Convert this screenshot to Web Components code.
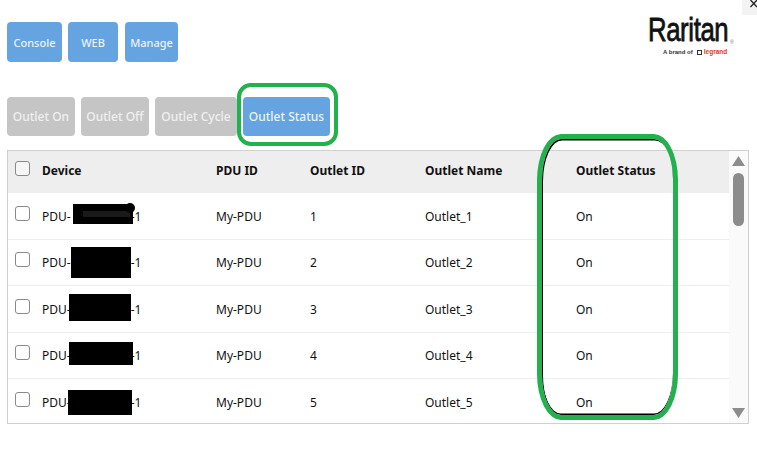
<!DOCTYPE html>
<html>
<head>
<meta charset="utf-8">
<title>Outlet Status</title>
<style>
  html, body { margin: 0; padding: 0; background: #fff; }
  body { font-family: "Noto Sans", "Liberation Sans", sans-serif; font-size: 12px; color: #111; overflow: hidden; }
</style>
</head>
<body>
<pdu-page>
  <pdu-button slot="nav" width="55" height="40" small>Console</pdu-button>
  <pdu-button slot="nav" width="50" height="40" small>WEB</pdu-button>
  <pdu-button slot="nav" width="53" height="40" small style="margin-left:1px">Manage</pdu-button>
  <raritan-logo slot="logo"></raritan-logo>

  <pdu-button slot="actions" width="68" height="39" disabled>Outlet On</pdu-button>
  <pdu-button slot="actions" width="68" height="39" disabled>Outlet Off</pdu-button>
  <pdu-button slot="actions" width="82" height="39" disabled>Outlet Cycle</pdu-button>
  <pdu-button slot="actions" width="87" height="39">Outlet Status</pdu-button>

  <outlet-table slot="table">
    <outlet-row outlet="1" mask="65,11,60,20" blob></outlet-row>
    <outlet-row outlet="2" mask="63,7,60,31"></outlet-row>
    <outlet-row outlet="3" mask="61,8,62,27"></outlet-row>
    <outlet-row outlet="4" mask="61,9,64,23"></outlet-row>
    <outlet-row outlet="5" mask="60,11,64,25"></outlet-row>
  </outlet-table>

  <green-ring slot="marks" x="237" y="83" w="101" h="63" stroke="4.5" rx="14" ry="14"></green-ring>
  <green-ring slot="marks" x="537" y="134" w="141" h="286" stroke="5" rx="24" ry="46" inked></green-ring>
</pdu-page>

<script>
// Page shell
const pageTemplate = document.createElement('template');
pageTemplate.innerHTML = `
<style>
  :host {
    display: block;
    position: relative;
    width: 757px;
    height: 465px;
    box-sizing: border-box;
    padding: 22px 8px 0 7px;
  }
  .top {
    display: flex;
    justify-content: space-between;
    height: 40px;
  }
  .group {
    display: flex;
    gap: 6px;
  }
  .actions {
    margin-top: 35px;
    margin-bottom: 14px;
  }
  .close {
    position: absolute;
    right: 0;
    top: 0;
    width: 15px;
    height: 15px;
    background: #f3f3f3;
    overflow: hidden;
  }
  .close svg { display: block; margin-left: 8px; }
</style>
<div class="top">
  <div class="group"><slot name="nav"></slot></div>
  <slot name="logo"></slot>
</div>
<div class="group actions"><slot name="actions"></slot></div>
<slot name="table"></slot>
<slot name="marks"></slot>
<div class="close">
  <svg width="7" height="14" viewBox="0 0 7 14"><path d="M0.500 0L7 7M7 0L0.500 7" stroke="#222" stroke-width="1.300" fill="none"/></svg>
</div>
`;

class PduPage extends HTMLElement {
  constructor() {
    super();
    this.attachShadow({ mode: 'open' });
    this.shadowRoot.appendChild(pageTemplate.content.cloneNode(true));
  }
}

// Button
const buttonTemplate = document.createElement('template');
buttonTemplate.innerHTML = `
<style>
  :host {
    display: flex;
    align-items: center;
    justify-content: center;
    box-sizing: border-box;
    border-radius: 4px;
    background: #65a4e0;
    color: #eaf3fc;
    font-size: 12px;
    font-weight: 500;
    white-space: nowrap;
  }
  :host([small]) {
    font-size: 11px;
  }
  :host([disabled]) {
    background: #c5c5c5;
    color: #f0f0f0;
  }
</style>
<slot></slot>
`;

class PduButton extends HTMLElement {
  constructor() {
    super();
    this.attachShadow({ mode: 'open' });
    this.shadowRoot.appendChild(buttonTemplate.content.cloneNode(true));
  }

  connectedCallback() {
    this.style.width = this.getAttribute('width') + 'px';
    this.style.height = this.getAttribute('height') + 'px';
  }
}

// Logo
const logoTemplate = document.createElement('template');
logoTemplate.innerHTML = `
<style>
  :host {
    display: block;
    position: relative;
    width: 92px;
    height: 40px;
    margin-top: -8px;
    margin-right: 9px;
    font-family: "Liberation Sans", sans-serif;
  }
  .name {
    position: absolute;
    left: 0;
    top: -3px;
    font-size: 33px;
    line-height: 38px;
    font-weight: 400;
    color: #111;
    letter-spacing: -0.5px;
    transform: scaleX(0.78);
    transform-origin: 0 0;
    -webkit-text-stroke: 0.8px #111;
    white-space: nowrap;
  }
  .reg {
    position: absolute;
    left: 82px;
    top: 25px;
    font-size: 5px;
    line-height: 6px;
    color: #777;
  }
  .tag {
    position: absolute;
    left: 15px;
    top: 34px;
    display: flex;
    align-items: center;
    gap: 2px;
    font-size: 6px;
    line-height: 8px;
    font-weight: 700;
    color: #333;
    white-space: nowrap;
  }
  .mark {
    width: 5px;
    height: 5px;
    box-sizing: border-box;
    border: 1.5px solid #333;
    margin-left: 2px;
  }
  .legrand { color: #e3342f; font-size: 6.5px; }
</style>
<span class="name">Raritan</span>
<span class="reg">®</span>
<div class="tag"><span>A brand of</span><span class="mark"></span><span class="legrand">legrand</span></div>
`;

class RaritanLogo extends HTMLElement {
  constructor() {
    super();
    this.attachShadow({ mode: 'open' });
    this.shadowRoot.appendChild(logoTemplate.content.cloneNode(true));
  }
}

// Checkbox
const checkTemplate = document.createElement('template');
checkTemplate.innerHTML = `
<style>
  :host {
    display: block;
    box-sizing: border-box;
    width: 15px;
    height: 15px;
    border: 1.5px solid #8a8a8a;
    border-radius: 3px;
    background: #fff;
  }
</style>
`;

class PduCheck extends HTMLElement {
  constructor() {
    super();
    this.attachShadow({ mode: 'open' });
    this.shadowRoot.appendChild(checkTemplate.content.cloneNode(true));
  }
}

// Table with its header and fake scrollbar
const tableTemplate = document.createElement('template');
tableTemplate.innerHTML = `
<style>
  :host {
    display: block;
    box-sizing: border-box;
    width: 742px;
    height: 274px;
    border: 1px solid #d0d0d0;
  }
  .wrap {
    display: flex;
    height: 100%;
  }
  .main {
    flex: 1;
    min-width: 0;
    overflow: hidden;
  }
  .head {
    display: grid;
    grid-template-columns: 34px 174px 94px 115px 151px 1fr;
    align-items: center;
    box-sizing: border-box;
    height: 42px;
    padding-bottom: 3px;
    background: #eeeeee;
    font-weight: 700;
    color: #111;
  }
  .head pdu-check {
    margin: -4px 0 0 7px;
    background: #f6f6f6;
  }
  .bar {
    position: relative;
    width: 19px;
    background: #fafafa;
  }
  .thumb {
    position: absolute;
    left: 4px;
    top: 22px;
    width: 11px;
    height: 53px;
    border-radius: 6px;
    background: #8c8c8c;
  }
  .arrow {
    position: absolute;
    left: 3px;
    display: block;
  }
  .up { top: 5px; }
  .down { bottom: 5px; }
</style>
<div class="wrap">
  <div class="main">
    <div class="head">
      <pdu-check></pdu-check>
      <span>Device</span>
      <span>PDU ID</span>
      <span>Outlet ID</span>
      <span>Outlet Name</span>
      <span>Outlet Status</span>
    </div>
    <slot></slot>
  </div>
  <div class="bar">
    <svg class="arrow up" width="13" height="10" viewBox="0 0 13 10"><path d="M6.500 0L13 10H0Z" fill="#8c8c8c"/></svg>
    <div class="thumb"></div>
    <svg class="arrow down" width="13" height="10" viewBox="0 0 13 10"><path d="M0 0H13L6.500 10Z" fill="#8c8c8c"/></svg>
  </div>
</div>
`;

class OutletTable extends HTMLElement {
  constructor() {
    super();
    this.attachShadow({ mode: 'open' });
    this.shadowRoot.appendChild(tableTemplate.content.cloneNode(true));
  }
}

// Row, mask is the black box over the device serial: left,top,width,height
const rowTemplate = document.createElement('template');
rowTemplate.innerHTML = `
<style>
  :host {
    display: grid;
    position: relative;
    grid-template-columns: 34px 174px 94px 115px 151px 1fr;
    align-items: center;
    box-sizing: border-box;
    height: 46.5px;
    padding-top: 1px;
    border-bottom: 1.5px solid #eeeeee;
    color: #111;
  }
  pdu-check { margin: -6px 0 0 7px; }
  .mask {
    position: absolute;
    background: #000;
  }
  :host([blob]) .mask {
    background: linear-gradient(#000 7px, #1a1a1a 7px, #1a1a1a 13px, #000 13px) no-repeat 10px 0 / 47px 100%, #000;
  }
  .blob {
    position: absolute;
    width: 10px;
    height: 10px;
    border-radius: 50%;
    background: #000;
  }
  .device { white-space: nowrap; }
  .gap { display: inline-block; width: 60px; }
</style>
<pdu-check></pdu-check>
<span class="device">PDU-<span class="gap"></span>-1</span>
<span>My-PDU</span>
<span class="num"></span>
<span class="name"></span>
<span>On</span>
<div class="mask"></div>
`;

class OutletRow extends HTMLElement {
  constructor() {
    super();
    this.attachShadow({ mode: 'open' });
    this.shadowRoot.appendChild(rowTemplate.content.cloneNode(true));
  }

  connectedCallback() {
    const outlet = this.getAttribute('outlet');
    this.shadowRoot.querySelector('.num').textContent = outlet;
    this.shadowRoot.querySelector('.name').textContent = 'Outlet_' + outlet;

    const [left, top, width, height] = this.getAttribute('mask').split(',');
    const mask = this.shadowRoot.querySelector('.mask');
    mask.style.left = left + 'px';
    mask.style.top = top + 'px';
    mask.style.width = width + 'px';
    mask.style.height = height + 'px';

    if (this.hasAttribute('blob')) {
      const blob = document.createElement('div');
      blob.className = 'blob';
      blob.style.left = (Number(left) + 52) + 'px';
      blob.style.top = (Number(top) - 1) + 'px';
      this.shadowRoot.appendChild(blob);
    }
  }
}

// Green hand drawn style highlight laid over the screenshot
const ringTemplate = document.createElement('template');
ringTemplate.innerHTML = `
<style>
  :host {
    display: block;
    position: absolute;
    box-sizing: border-box;
    border-style: solid;
    border-color: #22b14c;
    pointer-events: none;
  }
  :host([inked]) {
    box-shadow: inset 1px 1.5px 0 #000, inset 0 -1.5px 0 #000;
  }
</style>
`;

class GreenRing extends HTMLElement {
  constructor() {
    super();
    this.attachShadow({ mode: 'open' });
    this.shadowRoot.appendChild(ringTemplate.content.cloneNode(true));
  }

  connectedCallback() {
    this.style.left = this.getAttribute('x') + 'px';
    this.style.top = this.getAttribute('y') + 'px';
    this.style.width = this.getAttribute('w') + 'px';
    this.style.height = this.getAttribute('h') + 'px';
    this.style.borderWidth = this.getAttribute('stroke') + 'px';
    this.style.borderRadius = this.getAttribute('rx') + 'px / ' + this.getAttribute('ry') + 'px';
  }
}

customElements.define('pdu-check', PduCheck);
customElements.define('pdu-button', PduButton);
customElements.define('raritan-logo', RaritanLogo);
customElements.define('outlet-row', OutletRow);
customElements.define('outlet-table', OutletTable);
customElements.define('green-ring', GreenRing);
customElements.define('pdu-page', PduPage);
</script>
</body>
</html>
